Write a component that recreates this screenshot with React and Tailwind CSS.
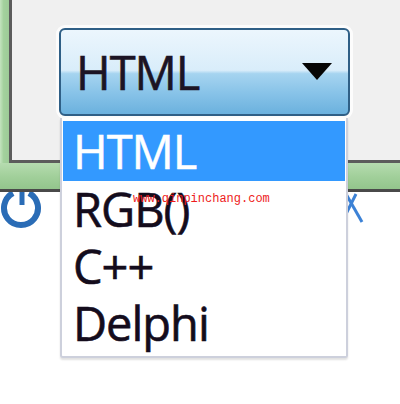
export default function App() {
  const font = { fontFamily: '"Open Sans", "Noto Sans", sans-serif' };
  return (
    <div className="relative w-[400px] h-[404px] overflow-hidden bg-white" style={font}>
      {/* top window area */}
      <div className="flex flex-col">
        <div className="flex h-[163px]">
          <div className="w-[9px] bg-[linear-gradient(to_right,#c4e4bf_0%,#a3d19d_40%,#9dcb97_100%)]" />
          <div className="flex-1 border-l-[3px] border-b-[3px] border-[#5c5c5c] bg-[#f0f0f0] pl-[47px] pt-[28px]">
            <div className="w-[291px] h-[88px] rounded-[6px] border-2 border-[#2f5f86] shadow-[0_0_0_3px_rgba(255,255,255,0.8)] bg-[linear-gradient(to_bottom,#ecf6fd_0%,#d9edfa_48%,#a6d4f0_52%,#88c3e8_75%,#6bb1de_100%)] flex items-center pl-[15px] pr-[16px]">
              <span className="flex-1 text-[47px] leading-[80px] tracking-[-1px] text-[#1c1424] [-webkit-text-stroke:0.6px_#1c1424]">HTML</span>
              <svg width="30" height="17" viewBox="0 0 30 17" className="mb-[2px]">
                <polygon points="0,0 30,0 15,17" fill="#050505" />
              </svg>
            </div>
          </div>
        </div>
        <div className="h-[29px] border-b-[3px] border-[#4a4a4a] bg-[linear-gradient(to_bottom,#b6dcb0_0%,#a2d09b_50%,#93c58c_100%)]" />
        <div className="relative flex justify-between h-[60px]">
          <svg width="44" height="44" viewBox="0 0 44 44">
            <path d="M29 1 A 17 17 0 1 1 13 1" fill="none" stroke="#2a6cb6" strokeWidth="6" />
            <line x1="22" y1="-4" x2="22" y2="13" stroke="#2a6cb6" strokeWidth="5" />
          </svg>
          <svg width="30" height="36" viewBox="0 0 30 36" className="mr-[30px]">
            <line x1="6" y1="2" x2="22" y2="30" stroke="#3c82d6" strokeWidth="3" />
            <line x1="16" y1="2" x2="3" y2="28" stroke="#3c82d6" strokeWidth="3" />
          </svg>
        </div>
      </div>

      {/* dropdown list */}
      <div className="absolute left-[60px] top-[118px] w-[288px] h-[240px] bg-white border-2 border-t-0 border-[#cdd0dc] rounded-b-[3px] shadow-[0_2px_2px_rgba(0,0,0,0.12)] pt-[3px] px-[1px] text-[47px] tracking-[-1px] text-[#140c1c]">
        <div className="h-[60px] leading-[60px] bg-[#3399ff] text-white pl-[10px] [-webkit-text-stroke:0.5px_#ffffff]">HTML</div>
        <div className="h-[57px] leading-[57px] pl-[10px] [-webkit-text-stroke:0.6px_#140c1c]">RGB()</div>
        <div className="h-[57px] leading-[57px] pl-[10px] [-webkit-text-stroke:0.6px_#140c1c]">C++</div>
        <div className="h-[57px] leading-[57px] pl-[10px] [-webkit-text-stroke:0.6px_#140c1c]">Delphi</div>
      </div>

      {/* watermark */}
      <div
        className="absolute left-[133px] top-[191px] text-[12px] leading-[16px] text-[#ee1c1c]"
        style={{ fontFamily: '"Liberation Mono", monospace' }}
      >
        www.qinpinchang.com
      </div>
    </div>
  );
}
